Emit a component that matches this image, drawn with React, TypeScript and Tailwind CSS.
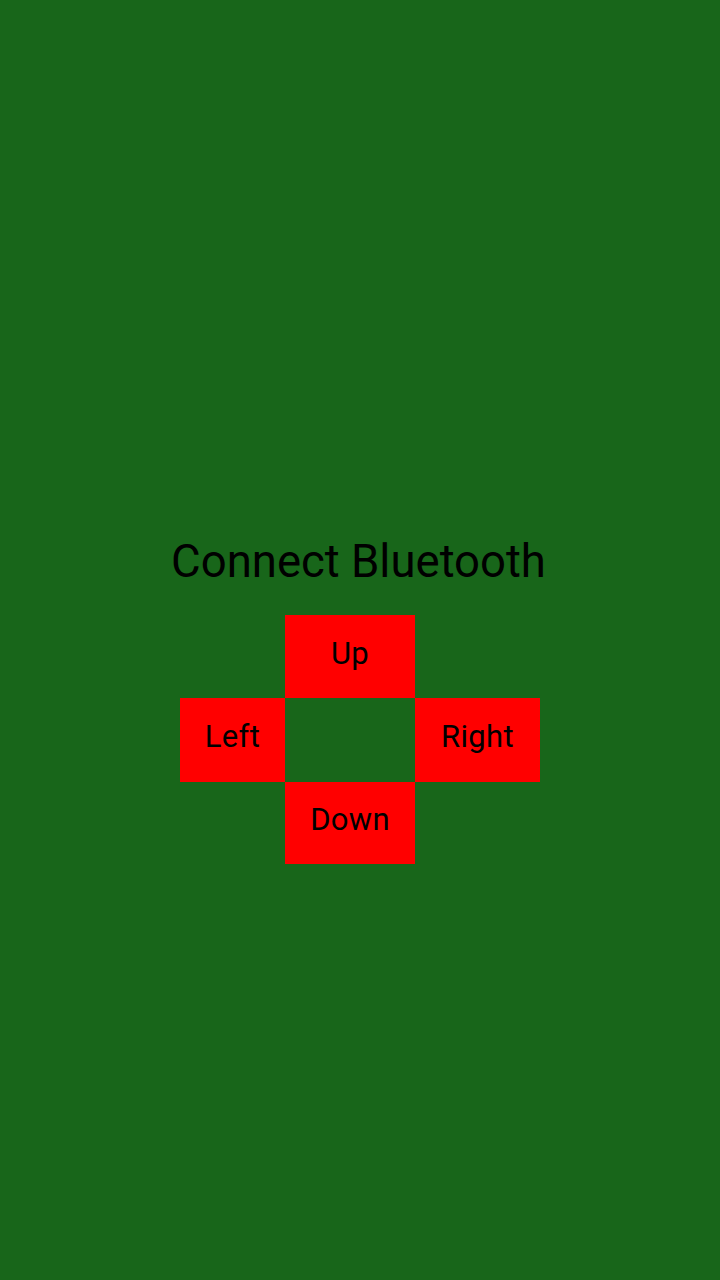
import React from 'react';

const Pad: React.FC<{ label: string; className?: string }> = ({ label, className = '' }) => (
  <button className={`flex items-center justify-center pb-[5px] bg-[#ff0000] text-black text-[31px] tracking-[0.3px] ${className}`}>
    {label}
  </button>
);

export default function App() {
  return (
    <div className="w-[720px] h-[1280px] bg-[#18661a] flex flex-col items-center pt-[532px] font-['Roboto',sans-serif]">
      <h1 className="text-[45.5px] leading-[60px] text-black ml-[-3px]">Connect Bluetooth</h1>
      <div className="mt-[23px] grid grid-cols-[105px_130px_125px] grid-rows-[83px_84px_82px]">
        <div />
        <Pad label="Up" />
        <div />
        <Pad label="Left" />
        <div />
        <Pad label="Right" />
        <div />
        <Pad label="Down" />
        <div />
      </div>
    </div>
  );
}
